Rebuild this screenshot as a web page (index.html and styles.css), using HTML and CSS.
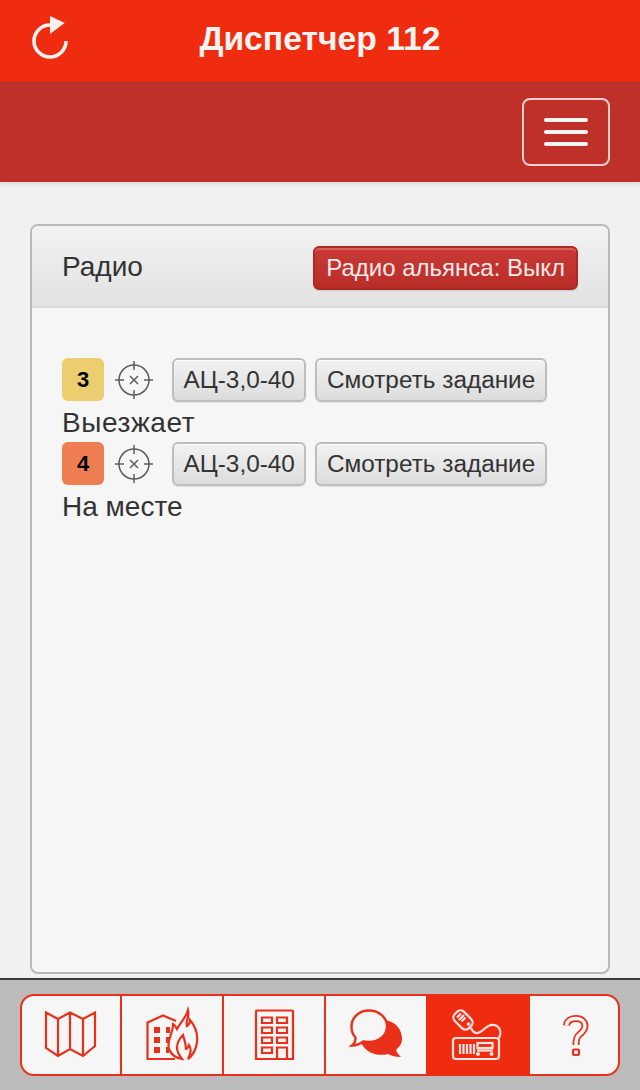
FILE: index.html
```html
<!DOCTYPE html>
<html lang="ru">
<head>
<meta charset="utf-8">
<title>Диспетчер 112</title>
<link rel="stylesheet" href="styles.css">
</head>
<body>
<div class="page">
  <header class="topbar">
    <button class="refresh" type="button" aria-label="Обновить">
      <svg width="44" height="48" viewBox="0 0 44 48">
        <path class="refresh-arc" d="M22 10 A16 16 0 1 0 38 26"/>
        <path class="refresh-head" d="M22 1 L36.700 8 L22 19 Z"/>
      </svg>
    </button>
    <h1 class="title">Диспетчер 112</h1>
    <span></span>
  </header>
  <nav class="navbar">
    <button class="toggle" type="button" aria-label="Меню">
      <span class="bar"></span><span class="bar"></span><span class="bar"></span>
    </button>
  </nav>
  <main class="content">
    <section class="panel">
      <div class="panel-heading">
        <span class="panel-title">Радио</span>
        <button class="btn btn-danger" type="button">Радио альянса: Выкл</button>
      </div>
      <div class="panel-body">
        <div class="unit">
          <div class="unit-row">
            <span class="badge badge-3">3</span>
            <svg class="cross" width="40" height="40" viewBox="0 0 40 40">
              <circle cx="20" cy="20" r="15"/>
              <path d="M20 1V10M20 30V39M1 20H10M30 20H39M16 16L24 24M24 16L16 24"/>
            </svg>
            <button class="btn" type="button">АЦ-3,0-40</button>
            <button class="btn" type="button">Смотреть задание</button>
          </div>
          <div class="status status-wide">Выезжает</div>
        </div>
        <div class="unit">
          <div class="unit-row">
            <span class="badge badge-4">4</span>
            <svg class="cross" width="40" height="40" viewBox="0 0 40 40">
              <circle cx="20" cy="20" r="15"/>
              <path d="M20 1V10M20 30V39M1 20H10M30 20H39M16 16L24 24M24 16L16 24"/>
            </svg>
            <button class="btn" type="button">АЦ-3,0-40</button>
            <button class="btn" type="button">Смотреть задание</button>
          </div>
          <div class="status">На месте</div>
        </div>
      </div>
    </section>
  </main>
  <footer class="footer">
    <div class="tabs">
      <a class="tab tab-line">
        <svg class="ico" width="60" height="60" viewBox="0 0 60 60">
          <path d="M6 7.500 L18 14 L30 7.500 L43 14 L55 7.500 V41 L43 51 L30 44 L18 51 L6 43 Z M18 14 V51 M30 7.500 V44 M43 14 V51"/>
        </svg>
      </a>
      <a class="tab tab-line">
        <svg class="ico" width="60" height="60" viewBox="0 0 60 60">
          <path d="M34 16 L21 10.500 L5.500 17.500 V54 H33"/>
          <path class="solid" d="M12 22h6v6h-6zM12 32h6v6h-6zM12 42h6v6h-6zM24 22h4v6h-4zM24 32h3v6h-3zM24 42h3v6h-3z"/>
          <path d="M46 5 C48 12 43 16 45 21 C48 19 48 17 48 15 C53 21 56 29 55 37 C54 45 50 51 46 54 C50 47 49 43 47 40 C46 43 45 44 44 44 C44 38 42 34 41 30 C38 33 35 38 35 43 C35 47 37 50 40 54 C34 53 29 49 27 44 C25 38 28 33 30 26 C31 23 31 21 31 19 C33 20 34 22 35 24 C38 18 44 13 46 5 Z"/>
        </svg>
      </a>
      <a class="tab tab-line">
        <svg class="ico" width="60" height="60" viewBox="0 0 60 60">
          <path d="M12 6.500 Q12 5.500 13 5.500 H48 Q49 5.500 49 6.500 V54 H12 Z"/>
          <path d="M18 12.500h10v5.500h-10zM33 12.500h10v5.500h-10zM18 22.500h10v5.500h-10zM33 22.500h10v5.500h-10zM18 32.500h10v5.500h-10zM33 32.500h10v5.500h-10zM18 42.500h10v5.500h-10zM33 54V42.500h10V54"/>
        </svg>
      </a>
      <a class="tab">
        <svg class="ico" width="60" height="60" viewBox="0 0 60 60">
          <path class="solid" d="M38 15 C50 16 56 25 56 34 C56 39 53 42 50 45 C51 48 53 50 55 52 C50 52 45 51 42 49 C30 52 20 47 15 38 Z"/>
          <path class="bubble" d="M23 5.500 C33 5.500 41 12.500 41 21.500 C41 30.500 33 37 23 37 C21 37 19 37 17 36.500 C14 39 10 40.500 6 40.500 C8 39 9.500 36.500 9.500 32.500 C6.500 29.500 5.500 26 5.500 21.500 C5.500 12.500 13 5.500 23 5.500 Z"/>
        </svg>
      </a>
      <a class="tab tab-active">
        <svg class="ico ico-white" width="60" height="60" viewBox="0 0 60 60">
          <rect x="8.500" y="5" width="13" height="20" rx="5" transform="rotate(-45 15 15)"/>
          <path d="M9 12.500 L13 8.500M11 15 L16 10M13.500 16.500 L17.500 12.500"/>
          <circle class="dot" cx="20.500" cy="19" r="1.800"/>
          <path d="M23 23 C26 30 31 29 35 25 C39 21 44 18 49 21 C53 24 53 29 51 33"/>
          <rect x="5" y="33" width="46" height="21" rx="3"/>
          <path d="M12 39V49M15.500 39V49M19 39V49M22.500 39V49M26 39V49"/>
          <rect x="29.500" y="38" width="15" height="5"/>
          <path d="M29 45.500H45"/>
          <circle class="dot" cx="30" cy="49" r="2"/>
          <circle class="dot" cx="43.500" cy="49" r="2"/>
        </svg>
      </a>
      <a class="tab">
        <svg class="ico" width="60" height="60" viewBox="0 0 60 60">
          <path class="q-outer" d="M22.500 20.500 C23 15 28 13.500 32 13.500 C38 13.500 41 17 41 21 C41 25 38 27.500 35 30 C33 31.500 32 33.500 32 40"/>
          <path class="q-inner" d="M22.500 20.500 C23 15 28 13.500 32 13.500 C38 13.500 41 17 41 21 C41 25 38 27.500 35 30 C33 31.500 32 33.500 32 40"/>
          <rect x="29" y="44.500" width="6" height="5.500" rx="1"/>
        </svg>
      </a>
    </div>
  </footer>
</div>
</body>
</html>
```
FILE: styles.css
```css
* { box-sizing: border-box; }
html, body { margin: 0; padding: 0; }
body {
  background: #f1f1f1;
  color: #333;
  font-family: "Liberation Sans", Arial, sans-serif;
}
.page {
  display: flex;
  flex-direction: column;
  height: 1090px;
  overflow: hidden;
}
.topbar {
  flex: none;
  height: 83px;
  display: grid;
  grid-template-columns: 1fr auto 1fr;
  align-items: center;
  padding-left: 28px;
  background: #f02c10;
  border-bottom: 1px solid #a33a33;
  padding-right: 28px;
}
.refresh {
  width: 44px;
  height: 48px;
  padding: 0;
  margin-top: -4px;
  background: none;
  border: 0;
  display: block;
}
.refresh svg { display: block; }
.refresh-arc { fill: none; stroke: #f6f1ef; stroke-width: 3.6px; }
.refresh-head { fill: #f6f1ef; }
.title {
  margin: 0;
  margin-top: -6px;
  font-size: 33.700px;
  font-weight: bold;
  color: #f7f3f1;
  text-align: center;
}
.navbar {
  flex: none;
  height: 99px;
  display: flex;
  justify-content: flex-end;
  align-items: center;
  padding-right: 30px;
  background: #bf302b;
  box-shadow: 0 1px 5px rgba(0, 0, 0, .14);
  position: relative;
}
.toggle {
  width: 88px;
  height: 68px;
  padding: 0;
  margin-top: -1px;
  background: none;
  border: 2px solid #efd0cd;
  border-radius: 8px;
  display: flex;
  flex-direction: column;
  align-items: center;
  justify-content: center;
  gap: 8px;
}
.bar {
  display: block;
  width: 44px;
  height: 4px;
  border-radius: 2px;
  background: #f8f3f2;
}
.content {
  flex: 1;
  min-height: 0;
  padding: 42px 30px 4px;
  display: flex;
}
.panel {
  flex: 1;
  display: flex;
  flex-direction: column;
  background: #f6f6f6;
  border: 2px solid #b9b9b9;
  border-radius: 8px;
  overflow: hidden;
}
.panel-heading {
  flex: none;
  height: 82px;
  padding: 0 30px;
  display: flex;
  justify-content: space-between;
  align-items: center;
  background: linear-gradient(#f2f2f2, #e2e2e2);
  border-bottom: 2px solid #dcdcdc;
}
.panel-title {
  font-size: 28px;
  color: #333;
  margin-top: 2px;
}
.panel-body {
  flex: 1;
  padding: 50px 30px 0;
}
.unit-row {
  display: flex;
  align-items: flex-start;
  height: 44px;
}
.status {
  height: 40px;
  font-size: 28px;
  line-height: 42px;
  color: #333;
}
.status-wide { letter-spacing: .6px; }
.badge {
  width: 42px;
  height: 43px;
  border-radius: 6px;
  display: flex;
  align-items: center;
  justify-content: center;
  font-size: 22px;
  font-weight: bold;
  color: #000;
}
.badge-3 { background: #ecce70; }
.badge-4 { background: #ef7d52; }
.cross {
  flex: none;
  margin: 2px 18px 0 10px;
  width: 40px;
  height: 40px;
}
.cross circle, .cross path {
  fill: none;
  stroke: #5c5c5c;
  stroke-width: 1.500px;
}
.btn {
  font-family: "Liberation Sans", Arial, sans-serif;
  font-size: 24.350px;
  height: 44px;
  padding: 0 9.500px;
  color: #333;
  border: 2px solid #bdbdbd;
  border-radius: 6px;
  background: linear-gradient(#f2f2f2, #dcdcdc);
  box-shadow: inset 0 1px 0 #fff, 0 1px 1px rgba(0, 0, 0, .08);
  margin-right: 9px;
}
.btn-danger {
  margin: 4px 0 0;
  padding: 0 11px;
  font-size: 24px;
  color: #f7eaea;
  border: 2px solid #ab2a26;
  background: linear-gradient(#c93a36, #b92d29);
  box-shadow: inset 0 2px 0 #d4605c, 0 1px 1px rgba(0, 0, 0, .12);
}
.footer {
  flex: none;
  height: 112px;
  background: #bcbcbc;
  border-top: 2px solid #3c3c3c;
  padding: 14px 20px;
}
.tabs {
  display: grid;
  grid-template-columns: 100px 102px 102px 100px 104px 88px;
  height: 82px;
  background: #f6f6f6;
  border: 2px solid #e8301a;
  border-radius: 14px;
  overflow: hidden;
}
.tab {
  display: flex;
  align-items: center;
  justify-content: center;
}
.tab-line { border-right: 2px solid #e8301a; }
.tab:first-child { padding-right: 2px; }
.tab-active { background: #f02c10; }
.ico { display: block; }
.ico path, .ico rect, .ico circle {
  fill: none;
  stroke: #e8301a;
  stroke-width: 2.200px;
}
.ico .solid { fill: #e8301a; stroke: none; }
.ico .bubble { fill: #f6f6f6; stroke-width: 2.400px; }
.ico-white path, .ico-white rect, .ico-white circle { stroke: #f8e6e2; }
.ico-white .dot { fill: #f8e6e2; stroke: none; }
.ico .q-outer { stroke-width: 7px; }
.ico .q-inner { stroke: #f6f6f6; stroke-width: 3.500px; }
```
